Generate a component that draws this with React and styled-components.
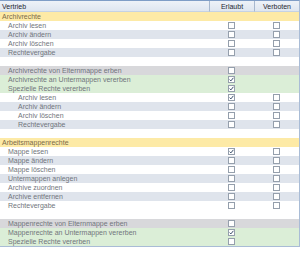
import React from "react";
import styled, { createGlobalStyle } from "styled-components";

const Global = createGlobalStyle`
  html, body { margin: 0; padding: 0; background: #fff; }
  body { font-family: "Liberation Sans", Arial, sans-serif; }
`;

const Table = styled.div`
  width: 300px;
  box-sizing: border-box;
  border-top: 1px solid #7f9dc6;
  border-right: 1px solid #a9bcd6;
  border-bottom: 1px solid #a9bcd6;
  display: grid;
  grid-template-columns: 209px 45px 45px;
`;

const Head = styled.div`
  height: 11px;
  border-bottom: 1px solid #c5d2e3;
  background: linear-gradient(#eef2f8, #dfe6f0);
  font-size: 7px;
  line-height: 11px;
  color: #1f2833;
  padding-left: ${(p) => (p.$center ? 0 : 2)}px;
  text-align: ${(p) => (p.$center ? "center" : "left")};
  border-left: ${(p) => (p.$sep ? "1px solid #a7b8cf" : "none")};
  box-sizing: border-box;
  white-space: nowrap;
`;

const bgFor = {
  white: "#ffffff",
  alt: "#dfe4ec",
  group: "#fdeaa6",
  inherit: "#d8d8db",
  green: "#dbeed7",
};

const Cell = styled.div`
  height: 9px;
  background: ${(p) => bgFor[p.$bg]};
  display: flex;
  align-items: center;
  justify-content: ${(p) => (p.$center ? "center" : "flex-start")};
  padding-left: ${(p) => p.$indent || 0}px;
  font-size: 7px;
  line-height: 9px;
  color: ${(p) => (p.$bg === "group" ? "#7a6a4a" : "#71757c")};
  white-space: nowrap;
  overflow: hidden;
`;

const Box = styled.span`
  width: 7px;
  height: 7px;
  box-sizing: border-box;
  border: 1px solid #959fac;
  background: #fff;
  display: flex;
  align-items: center;
  justify-content: center;
`;

function Check({ checked }) {
  return (
    <Box>
      {checked && (
        <svg width="5" height="5" viewBox="0 0 5 5">
          <path d="M0.6 2.6 L1.9 3.9 L4.4 0.8" fill="none" stroke="#3a4f6a" strokeWidth="1" />
        </svg>
      )}
    </Box>
  );
}

// [label, indent, bg, erlaubt, verboten]  erlaubt/verboten: null = none, false/true = box
const rows = [
  ["Archivrechte", 2, "group", null, null],
  ["Archiv lesen", 8, "white", false, false],
  ["Archiv ändern", 8, "alt", false, false],
  ["Archiv löschen", 8, "white", false, false],
  ["Rechtevergabe", 8, "alt", false, false],
  ["", 0, "white", null, null],
  ["Archivrechte von Elternmappe erben", 8, "inherit", false, null],
  ["Archivrechte an Untermappen vererben", 8, "green", true, null],
  ["Spezielle Rechte vererben", 8, "green", true, null],
  ["Archiv lesen", 18, "white", true, false],
  ["Archiv ändern", 18, "alt", false, false],
  ["Archiv löschen", 18, "white", false, false],
  ["Rechtevergabe", 18, "alt", false, false],
  ["", 0, "white", null, null],
  ["Arbeitsmappenrechte", 2, "group", null, null],
  ["Mappe lesen", 8, "white", true, false],
  ["Mappe ändern", 8, "alt", false, false],
  ["Mappe löschen", 8, "white", false, false],
  ["Untermappen anlegen", 8, "alt", false, false],
  ["Archive zuordnen", 8, "white", false, false],
  ["Archive entfernen", 8, "alt", false, false],
  ["Rechtevergabe", 8, "white", false, false],
  ["", 0, "white", null, null],
  ["Mappenrechte von Elternmappe erben", 8, "inherit", false, null],
  ["Mappenrechte an Untermappen vererben", 8, "green", true, null],
  ["Spezielle Rechte vererben", 8, "green", false, null],
];

export default function App() {
  return (
    <>
      <Global />
      <Table>
        <Head>Vertrieb</Head>
        <Head $center $sep>Erlaubt</Head>
        <Head $center $sep>Verboten</Head>
        {rows.map(([label, indent, bg, a, v], i) => (
          <React.Fragment key={i}>
            <Cell $bg={bg} $indent={indent}>{label}</Cell>
            <Cell $bg={bg} $center>{a !== null && <Check checked={a} />}</Cell>
            <Cell $bg={bg} $center>{v !== null && <Check checked={v} />}</Cell>
          </React.Fragment>
        ))}
      </Table>
    </>
  );
}
